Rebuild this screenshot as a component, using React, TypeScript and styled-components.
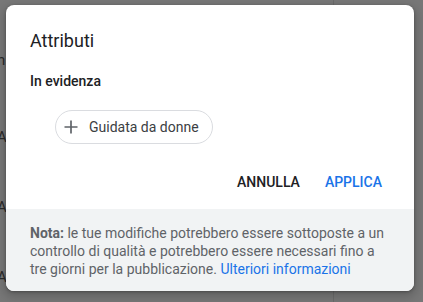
import React from "react";
import styled, { createGlobalStyle } from "styled-components";

const Global = createGlobalStyle`
  html, body { margin: 0; padding: 0; }
  body { font-family: Roboto, "Liberation Sans", Arial, sans-serif; }
`;

const Backdrop = styled.div`
  position: relative;
  width: 423px;
  height: 302px;
  background: #777777;
  overflow: hidden;
  display: flex;
  align-items: flex-start;
`;

const PageRule = styled.div`
  position: absolute;
  left: 333px;
  top: 0;
  bottom: 0;
  width: 1px;
  background: #6b6b6b;
`;

const PageGlyph = styled.span<{ $top: number }>`
  position: absolute;
  left: -3px;
  top: ${(p) => p.$top}px;
  font-size: 15px;
  line-height: 16px;
  color: #2a2a2a;
`;

const Dialog = styled.div`
  position: relative;
  margin: 5px 0 0 6px;
  width: 408px;
  height: 286px;
  background: #ffffff;
  border-radius: 8px;
  box-shadow: 0 1px 3px rgba(0, 0, 0, 0.3), 0 4px 8px 3px rgba(0, 0, 0, 0.15);
  display: flex;
  flex-direction: column;
  overflow: hidden;
`;

const Body = styled.div`
  padding: 24px 24px 0 24px;
  display: flex;
  flex-direction: column;
`;

const Title = styled.h2`
  margin: 0;
  font-size: 18px;
  line-height: 24px;
  font-weight: 400;
  color: #202124;
`;

const Section = styled.div`
  margin-top: 18px;
  font-size: 14px;
  line-height: 20px;
  font-weight: 500;
  color: #202124;
`;

const ChipRow = styled.div`
  margin-top: 19px;
  padding-left: 25px;
  display: flex;
`;

const Chip = styled.button`
  height: 34px;
  box-sizing: border-box;
  border: 1px solid #dadce0;
  border-radius: 17px;
  background: #fff;
  display: flex;
  align-items: center;
  gap: 9px;
  padding: 0 13px 0 6px;
  font-family: Roboto, "Liberation Sans", Arial, sans-serif;
  font-size: 14px;
  color: #3c4043;
  cursor: pointer;
`;

const Actions = styled.div`
  margin-top: 20px;
  padding: 0 24px 0 0;
  display: flex;
  justify-content: flex-end;
  gap: 9px;
`;

const ActionButton = styled.button<{ $primary?: boolean }>`
  height: 36px;
  padding: 0 8px;
  border: none;
  background: transparent;
  font-family: Roboto, "Liberation Sans", Arial, sans-serif;
  font-size: 14px;
  font-weight: 500;
  color: ${(p) => (p.$primary ? "#1a73e8" : "#202124")};
  cursor: pointer;
`;

const Footer = styled.div`
  margin-top: auto;
  background: #f1f3f4;
  padding: 15px 24px 13px 24px;
  font-size: 14px;
  line-height: 18px;
  color: #5f6368;
`;

const Strong = styled.b`
  font-weight: 700;
`;

const Link = styled.a`
  color: #1a73e8;
  text-decoration: none;
`;

const PlusIcon = () => (
  <svg width="18" height="18" viewBox="0 0 18 18">
    <path d="M9 2.5v13M2.5 9h13" stroke="#5f6368" strokeWidth="1.7" fill="none" />
  </svg>
);

export default function App() {
  return (
    <>
      <Global />
      <Backdrop>
        <PageRule />
        <PageGlyph $top={52}>h</PageGlyph>
        <PageGlyph $top={129}>A</PageGlyph>
        <PageGlyph $top={199}>A</PageGlyph>
        <PageGlyph $top={269}>A</PageGlyph>
        <Dialog>
          <Body>
            <Title>Attributi</Title>
            <Section>In evidenza</Section>
            <ChipRow>
              <Chip>
                <PlusIcon />
                Guidata da donne
              </Chip>
            </ChipRow>
          </Body>
          <Actions>
            <ActionButton>ANNULLA</ActionButton>
            <ActionButton $primary>APPLICA</ActionButton>
          </Actions>
          <Footer>
            <Strong>Nota:</Strong> le tue modifiche potrebbero essere sottoposte a un
            controllo di qualità e potrebbero essere necessari fino a tre giorni per la
            pubblicazione. <Link href="#">Ulteriori informazioni</Link>
          </Footer>
        </Dialog>
      </Backdrop>
    </>
  );
}
